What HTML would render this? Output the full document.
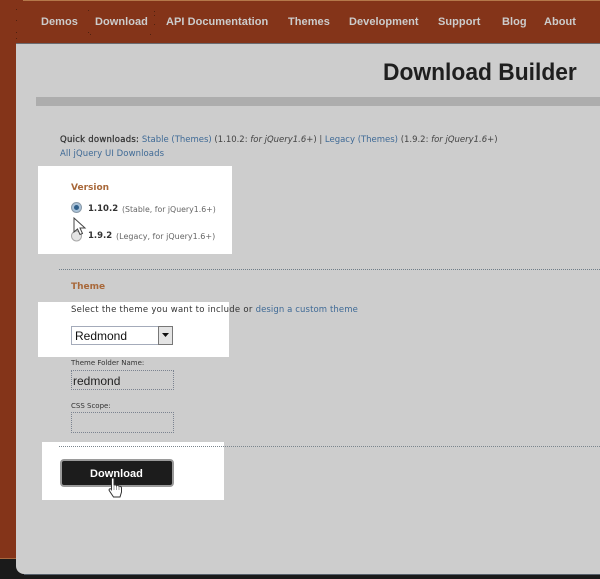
<!DOCTYPE html>
<html><head><meta charset="utf-8">
<style>
html,body{margin:0;padding:0;width:600px;height:579px;overflow:hidden;background:#1a1a1a}
body{position:relative;font-family:"DejaVu Sans","Liberation Sans",sans-serif}
.a{position:absolute;white-space:nowrap}
.nav{font:bold 11px "Liberation Sans",sans-serif;color:#cccccc;top:16px;letter-spacing:.05px;filter:blur(.25px)}
.t{font-size:8.500px;color:#444;line-height:11px;filter:blur(.25px)}
a{color:#3f6a96;text-decoration:none}
.d{position:absolute;width:1px;height:1px;background:#3a1a0c;opacity:.7}
</style></head>
<body>
<div class="a" style="left:0;top:0;width:600px;height:558px;background:#843419"></div>
<div class="a" style="left:0;top:558px;width:16px;height:1px;background:#a8683f"></div>
<div class="a" style="left:23px;top:0;width:577px;height:1px;background:#b5784a"></div>
<div class="a" style="left:16px;top:43px;width:584px;height:531px;background:#cdcdcd;border-bottom-left-radius:8px;border-top:1px solid #6b6b70;box-sizing:border-box"></div>
<div class="a" style="left:24px;top:574px;width:576px;height:1px;background:#56606a"></div>

<div class="a nav" style="left:41px">Demos</div>
<div class="a nav" style="left:95px">Download</div>
<div class="a nav" style="left:166px">API Documentation</div>
<div class="a nav" style="left:288px">Themes</div>
<div class="a nav" style="left:349px">Development</div>
<div class="a nav" style="left:438px">Support</div>
<div class="a nav" style="left:502px">Blog</div>
<div class="a nav" style="left:544px">About</div>

<i class="d" style="left:88px;top:10px"></i><i class="d" style="left:88px;top:32px"></i><i class="d" style="left:90px;top:34px"></i>
<i class="d" style="left:154px;top:11px"></i><i class="d" style="left:154px;top:15px"></i><i class="d" style="left:154px;top:24px"></i><i class="d" style="left:150px;top:34px"></i>
<i class="d" style="left:16px;top:9px"></i><i class="d" style="left:16px;top:20px"></i><i class="d" style="left:16px;top:32px"></i><i class="d" style="left:16px;top:38px"></i>

<div class="a" style="left:383px;top:58px;font:bold 24px/30px 'Liberation Sans',sans-serif;color:#1f1f1f;transform:scaleX(.95);transform-origin:left top">Download Builder</div>
<div class="a" style="left:36px;top:97px;width:564px;height:9px;background:#adadad"></div>

<div class="a t" style="left:60px;top:135px;letter-spacing:-.01px"><span style="color:#333;letter-spacing:.25px;-webkit-text-stroke:.25px #333">Quick downloads:</span> <a>Stable</a> <a>(Themes)</a> (1.10.2: <i>for jQuery1.6+</i>) | <a>Legacy</a> <a>(Themes)</a> (1.9.2: <i>for jQuery1.6+</i>)</div>
<div class="a t" style="left:60px;top:149px;letter-spacing:.08px"><a>All jQuery UI Downloads</a></div>

<div class="a" style="left:38px;top:166px;width:194px;height:88px;background:#fff"></div>
<div class="a" style="left:71px;top:182px;font:bold 9px/12px 'DejaVu Sans',sans-serif;color:#a8683a">Version</div>
<svg class="a" style="left:70px;top:201px" width="14" height="42" viewBox="0 0 14 42">
<circle cx="6.500" cy="6.500" r="5" fill="#a9c2d8" stroke="#8a9aa8"/><circle cx="6.500" cy="6.500" r="2.500" fill="#2f5f8a"/>
<circle cx="6.500" cy="35" r="5" fill="#e4e4e4" stroke="#a8a8a8"/>
</svg>
<div class="a" style="left:88px;top:203px;font:bold 8.500px/12px 'DejaVu Sans',sans-serif;color:#333">1.10.2</div>
<div class="a" style="left:122px;top:204px;font-size:7.800px;line-height:11px;color:#666">(Stable, for jQuery1.6+)</div>
<div class="a" style="left:88px;top:230px;font:bold 8.500px/12px 'DejaVu Sans',sans-serif;color:#333">1.9.2</div>
<div class="a" style="left:116px;top:231px;font-size:8px;line-height:11px;color:#666">(Legacy, for jQuery1.6+)</div>
<svg class="a" style="left:73px;top:217px" width="14" height="19" viewBox="0 0 14 19">
<path d="M1 1V15L4.500 12L7 17.500L9.500 16.500L7 11H12Z" fill="#fff" stroke="#444" stroke-width="1"/>
</svg>

<div class="a" style="left:59px;top:269px;width:541px;border-top:1px dotted #6f7d88"></div>
<div class="a" style="left:71px;top:281px;font:bold 9px/12px 'DejaVu Sans',sans-serif;color:#a8683a">Theme</div>

<div class="a" style="left:38px;top:302px;width:191px;height:55px;background:#fff"></div>
<div class="a t" style="left:71px;top:305px;color:#333;letter-spacing:.27px">Select the theme you want to include or <a style="letter-spacing:.1px">design a custom theme</a></div>
<div class="a" style="left:71px;top:326px;width:102px;height:19px;background:#fff;border:1px solid #a4abba;box-sizing:border-box"></div>
<div class="a" style="left:75px;top:329px;font:12px/14px 'Liberation Sans',sans-serif;color:#111">Redmond</div>
<div class="a" style="left:158px;top:326px;width:15px;height:19px;background:#e4e4e4;border:1px solid #777;box-sizing:border-box"></div>
<svg class="a" style="left:162px;top:333px" width="8" height="6"><path d="M0 0H7L3.500 4Z" fill="#111"/></svg>

<div class="a" style="left:71px;top:358px;font-size:7px;line-height:10px;color:#333">Theme Folder Name:</div>
<div class="a" style="left:71px;top:370px;width:103px;height:20px;border:1px dotted #7b8390;box-sizing:border-box"></div>
<div class="a" style="left:73px;top:374px;font:12px/14px 'Liberation Sans',sans-serif;color:#222">redmond</div>
<div class="a" style="left:71px;top:401px;font-size:7px;line-height:10px;color:#333">CSS Scope:</div>
<div class="a" style="left:71px;top:412px;width:103px;height:21px;border:1px dotted #7b8390;box-sizing:border-box"></div>

<div class="a" style="left:42px;top:442px;width:182px;height:58px;background:#fff"></div>
<div class="a" style="left:59px;top:446px;width:541px;border-top:1px dotted #7b858d"></div>
<div class="a" style="left:60px;top:459px;width:114px;height:28px;background:#1c1c1c;border:2px solid #9a9a9a;border-radius:4px;box-sizing:border-box"></div>
<div class="a" style="left:90px;top:467px;font:bold 11px/14px 'Liberation Sans',sans-serif;color:#fff;letter-spacing:.05px">Download</div>
<svg class="a" style="left:108px;top:477px" width="15" height="21" viewBox="0 0 15 21">
<path d="M3.500 2C3.500 .5 6 .5 6 2V8.500C6.500 7.500 8 7.500 8.500 9C9 8 10.500 8 11 9.500C11.500 9 13.500 9.200 13.500 11V15L12 20H5.500L1.200 13.500C.500 12 2.500 11 3.500 12.500Z" fill="#fff" stroke="#333" stroke-width="1"/>
<path d="M6 9V13M8.500 9V13M11 9.500V13" stroke="#777" stroke-width=".7"/>
</svg>
</body></html>
